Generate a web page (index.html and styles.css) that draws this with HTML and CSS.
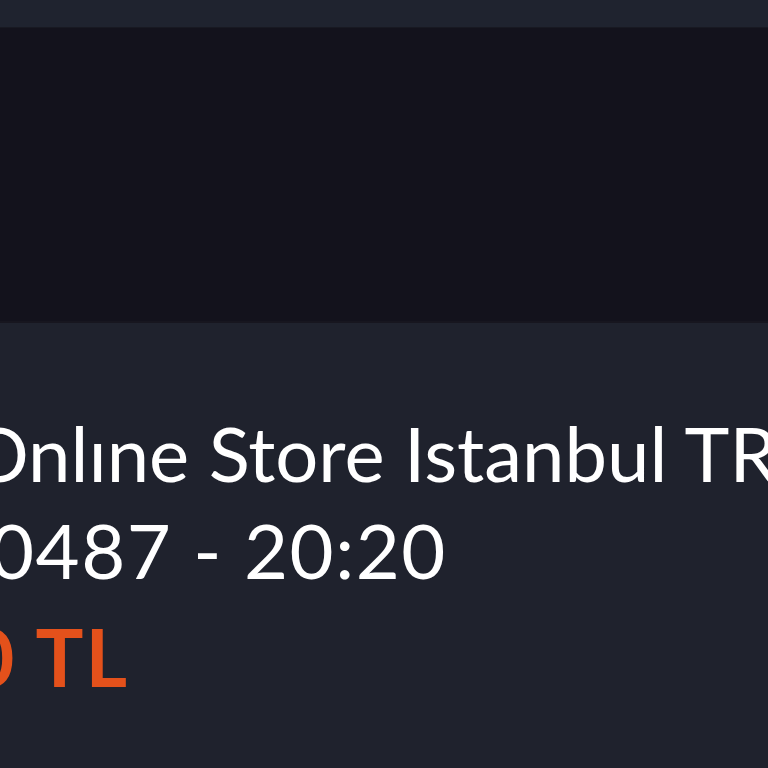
FILE: index.html
```html
<!DOCTYPE html>
<html lang="tr">
<head>
  <meta charset="UTF-8" />
  <meta name="viewport" content="width=device-width, initial-scale=1" />
  <title>Sipariş</title>
  <link rel="stylesheet" href="styles.css">
</head>
<body>
  <div class="topbar"></div>
  <div class="media"></div>
  <div class="info">
    <div class="store">Onlıne Store Istanbul TR</div>
    <div class="order">0487 - 20:20</div>
    <div class="price">0 TL</div>
  </div>
</body>
</html>
```

FILE: styles.css
```css
body {
  margin: 0;
  background: #1f222d;
  font-family: 'Lato', 'Noto Sans', sans-serif;
  color: #ffffff;
  overflow: hidden;
}
.topbar {
  height: 27px;
  background: #1f232f;
  border-bottom: 1px solid #181922;
}
.media {
  height: 293px;
  background: #13121c;
  border-bottom: 2px solid #17161f;
}
.info {
  padding-top: 81px;
  white-space: nowrap;
}
.store {
  font-size: 76px;
  line-height: 97px;
  margin-left: -32px;
}
.order {
  font-size: 76px;
  line-height: 97px;
  letter-spacing: 1.5px;
  margin-left: -10px;
}
.price {
  font-size: 80px;
  line-height: 109px;
  font-weight: 700;
  letter-spacing: 2px;
  color: #e4511b;
  margin-top: 4px;
  margin-left: -32px;
}
```
